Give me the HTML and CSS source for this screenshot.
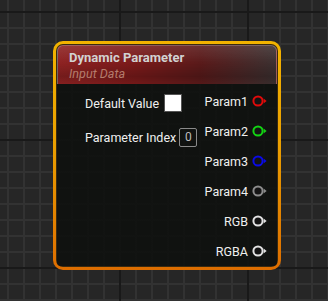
FILE: index.html
```html
<!DOCTYPE html>
<html>
<head>
<meta charset="utf-8">
<link rel="stylesheet" href="styles.css">
</head>
<body>
<div class="canvas">
  <div class="node">
    <div class="node-inner">
      <div class="header">
        <div class="title">Dynamic Parameter</div>
        <div class="subtitle">Input Data</div>
      </div>
      <div class="content">
        <div class="inputs">
          <div class="in-row"><span class="label">Default Value</span><span class="swatch"></span></div>
          <div class="in-row"><span class="label">Parameter Index</span><span class="numbox">0</span></div>
        </div>
        <div class="outputs">
          <div class="out-row"><span class="label">Param1</span><svg class="pin pin-red" viewBox="0 0 16 14" width="16" height="14"><circle cx="6" cy="7" r="4.6"/><polygon points="11.6,4.6 14.6,7 11.6,9.4"/></svg></div>
          <div class="out-row"><span class="label">Param2</span><svg class="pin pin-green" viewBox="0 0 16 14" width="16" height="14"><circle cx="6" cy="7" r="4.6"/><polygon points="11.6,4.6 14.6,7 11.6,9.4"/></svg></div>
          <div class="out-row"><span class="label">Param3</span><svg class="pin pin-blue" viewBox="0 0 16 14" width="16" height="14"><circle cx="6" cy="7" r="4.6"/><polygon points="11.6,4.6 14.6,7 11.6,9.4"/></svg></div>
          <div class="out-row"><span class="label">Param4</span><svg class="pin pin-gray" viewBox="0 0 16 14" width="16" height="14"><circle cx="6" cy="7" r="4.6"/><polygon points="11.6,4.6 14.6,7 11.6,9.4"/></svg></div>
          <div class="out-row"><span class="label">RGB</span><svg class="pin pin-white" viewBox="0 0 16 14" width="16" height="14"><circle cx="6" cy="7" r="4.6"/><polygon points="11.6,4.6 14.6,7 11.6,9.4"/></svg></div>
          <div class="out-row"><span class="label">RGBA</span><svg class="pin pin-white" viewBox="0 0 16 14" width="16" height="14"><circle cx="6" cy="7" r="4.6"/><polygon points="11.6,4.6 14.6,7 11.6,9.4"/></svg></div>
        </div>
      </div>
    </div>
  </div>
</div>
</body>
</html>
```
FILE: styles.css
```css
html, body {
  margin: 0;
  height: 100%;
}
body {
  background-color: #262626;
  background-image:
    linear-gradient(to right, #191919 2px, transparent 2px),
    linear-gradient(to bottom, #191919 2px, transparent 2px),
    linear-gradient(to right, #323232 2px, transparent 2px),
    linear-gradient(to bottom, #323232 2px, transparent 2px);
  background-size: 128px 128px, 128px 128px, 16px 16px, 16px 16px;
  background-position: 119px 0, 0 11px, 7px 0, 0 11px;
  font-family: Roboto, "Liberation Sans", sans-serif;
  overflow: hidden;
}
.canvas {
  padding: 41px 0 0 53px;
}
.node {
  width: 228px;
  height: 229px;
  box-sizing: border-box;
  padding: 3px;
  border-radius: 10px;
  background: linear-gradient(to bottom, #f2b300 0%, #eba000 45%, #dd6d00 100%);
}
.node-inner {
  height: 100%;
  box-sizing: border-box;
  border-radius: 7px;
  padding: 1px 1px 4px;
  background-color: #3a2a10;
  display: flex;
  flex-direction: column;
}
.header {
  height: 39px;
  flex: none;
  box-sizing: border-box;
  padding: 4px 0 0 11px;
  border-radius: 6px 6px 0 0;
  border: 1px solid rgba(190, 170, 170, 0.45);
  border-bottom: none;
  background:
    linear-gradient(to bottom, rgba(255,255,255,0.10) 0%, rgba(255,255,255,0) 45%, rgba(0,0,0,0.18) 80%, rgba(0,0,0,0.05) 100%),
    linear-gradient(to right, #8e2222 0%, #7a1a1a 35%, #5a1a1a 65%, #3b3030 100%);
}
.title {
  font-weight: 700;
  font-size: 13px;
  line-height: 16px;
  color: #d2d2d2;
}
.subtitle {
  font-style: italic;
  font-size: 12.6px;
  line-height: 16px;
  color: #b57b6c;
}
.content {
  flex: 1;
  display: flex;
  justify-content: space-between;
  background-color: #101210;
  background-image:
    linear-gradient(rgba(16,18,16,0.93), rgba(16,18,16,0.93)),
    linear-gradient(to right, #262626 2px, transparent 2px),
    linear-gradient(to bottom, #262626 2px, transparent 2px);
  background-size: auto, 16px 16px, 16px 16px;
  background-position: 0 0, 7px 0, 0 11px;
  background-attachment: fixed;
  border-radius: 0 0 4px 4px;
}
.inputs {
  padding: 2px 0 0 28px;
}
.in-row {
  height: 34px;
  display: flex;
  align-items: center;
  gap: 5px;
}
.label {
  font-size: 12.5px;
  color: #efefef;
}
.swatch {
  width: 18px;
  height: 18px;
  background: #ffffff;
  border: 1px solid #555;
  box-sizing: border-box;
}
.numbox {
  width: 18px;
  height: 19px;
  box-sizing: border-box;
  border: 1px solid #8a8a8a;
  border-radius: 2px;
  color: #bdbdbd;
  font-size: 12px;
  display: flex;
  align-items: center;
  justify-content: center;
  margin-left: -2px;
}
.outputs {
  padding: 2px 9px 0 0;
}
.out-row {
  height: 30px;
  display: flex;
  align-items: center;
  justify-content: flex-end;
  gap: 4px;
}
.pin circle {
  fill: #141414;
  stroke-width: 2;
}
.pin-red circle { stroke: #e00a0a; }
.pin-red polygon { fill: #e00a0a; }
.pin-green circle { stroke: #13d313; }
.pin-green polygon { fill: #13d313; }
.pin-blue circle { stroke: #0a0ae6; }
.pin-blue polygon { fill: #0a0ae6; }
.pin-gray circle { stroke: #8c8c8c; }
.pin-gray polygon { fill: #8c8c8c; }
.pin-white circle { stroke: #e2e2e2; }
.pin-white polygon { fill: #e2e2e2; }
```
